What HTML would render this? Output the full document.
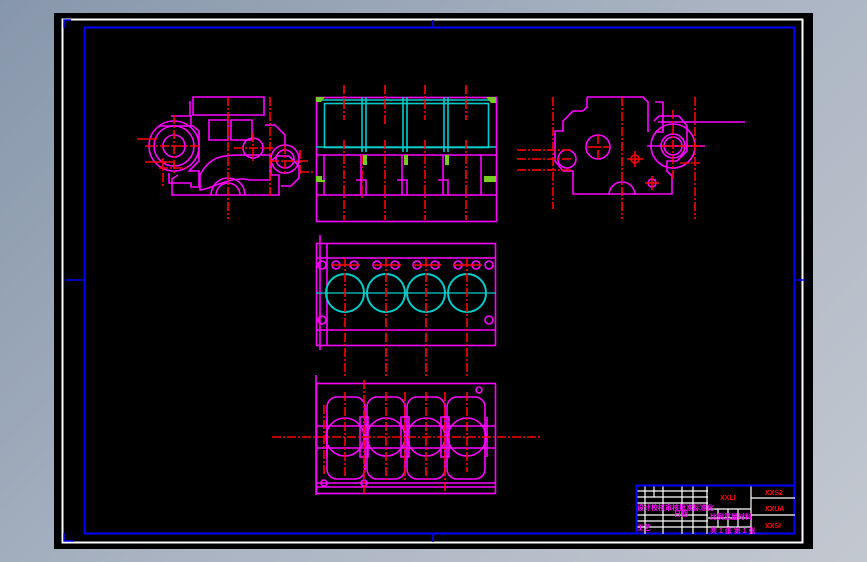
<!DOCTYPE html>
<html><head><meta charset="utf-8"><style>
html,body{margin:0;padding:0;width:867px;height:562px;overflow:hidden;background:linear-gradient(135deg,#8797ab 0%,#a9b3c2 50%,#c3c8d0 100%);}
svg{position:absolute;left:0;top:0}
text{font-family:"Liberation Sans","Noto Sans CJK SC",sans-serif;font-weight:bold}
</style></head><body>
<svg width="867" height="562" viewBox="0 0 867 562">
<rect x="54" y="13" width="759" height="536" fill="#000"/>
<rect x="62.5" y="19.5" width="740" height="523" fill="none" stroke="#fff" stroke-width="2"/>
<rect x="84.5" y="27.5" width="710" height="506" fill="none" stroke="#00f" stroke-width="2"/>
<path d="M64 28V20H71M64 533v8h10M66 280h18M795 280h10M433 20v7M433 534v8" stroke="#00f" fill="none" stroke-width="1.5"/>

<g fill="none" stroke-width="1.6">
<!-- LEFT VIEW -->
<g stroke="#f0f">
<path d="M193 97h71v18h-71z M190 101v16 M264 97v12"/>
<path d="M171 116h20v10h-20 M158 126h35l6 5v30l-10 10 10 0v16h-8v-4h-22v-10 M171 195h108v-20h-8v-14 l6-5 h12 l10 10 v12 l-8 8 h-10 M172 195v-16l6-4"/>
<circle cx="174" cy="146" r="20"/><circle cx="174" cy="146" r="11"/><circle cx="174" cy="146" r="25"/>
<path d="M209 120h19v20h-19z M231 120h21v20h-21z"/>
<circle cx="253" cy="148" r="10"/>
<circle cx="285" cy="159" r="14"/><circle cx="285" cy="159" r="9"/>
<path d="M265 125h10l10 10v12 M200 175c10-20 25-20 45-20h25v25h-20c-20-5-40 10-50 10z"/>
<path d="M211 195a17 17 0 0 1 34 0 M216 195a12 12 0 0 1 24 0"/>
</g>
<g stroke="#f00">
<path d="M228 97v122 M270 97v100 M145 146h55 M174 115v60 M159 168h30 M163 158v30 M234 148h40 M253 133v30 M270 161h38 M285 145v30 M300 150v25 M300 172h14" stroke-dasharray="9 2 2 2"/>
<path d="M137 139h20 M145 162h30"/>
</g>

<!-- FRONT VIEW -->
<g stroke="#f0f">
<rect x="316.5" y="97.5" width="180" height="124"/>
<path d="M316 195h180 M316 155h180 M324 155v40 M481 155v40 M361 155v40 M402 155v40 M443 155v40 M356 180h10v15 M397 180h10v15 M438 180h10v15"/>
</g>
<g stroke="#0cc">
<rect x="324.5" y="103.5" width="164" height="44"/>
<path d="M316 100h180 M316 147h180 M362 97v55 M403 97v55 M444 97v55 M366 97v55 M407 97v55 M448 97v55"/>
</g>
<g fill="#7c2" stroke="none">
<path d="M316 97h9l-4 5h-5z M486 97h10v6h-5z M316 176h6v4h-6z M316 180h9v2h-9z M484 176h12v6h-12z M363 155h4v10h-4z M404 155h4v10h-4z M445 155h4v10h-4z"/>
</g>
<g stroke="#f00" stroke-dasharray="9 2 2 2"><path d="M344 85v35 M385 85v40 M425 85v35 M466 85v35 M344 140v80 M385 140v80 M425 140v80 M466 140v80 M362 155v45"/></g>

<!-- TOP PLAN -->
<g stroke="#f0f">
<rect x="316.5" y="243.5" width="179" height="102"/>
<path d="M316 258h180 M316 330h180 M327 243v102 M320 235v115"/>
<circle cx="322" cy="265" r="4"/><circle cx="489" cy="265" r="4"/><circle cx="322" cy="320" r="4"/><circle cx="489" cy="320" r="4"/>
<circle cx="336" cy="265" r="4"/><circle cx="354" cy="265" r="4"/><circle cx="377" cy="265" r="4"/><circle cx="395" cy="265" r="4"/>
<circle cx="417" cy="265" r="4"/><circle cx="435" cy="265" r="4"/><circle cx="458" cy="265" r="4"/><circle cx="476" cy="265" r="4"/>
</g>
<g stroke="#0cc" stroke-width="2"><circle cx="345" cy="293" r="19"/><circle cx="386" cy="293" r="19"/><circle cx="426" cy="293" r="19"/><circle cx="467" cy="293" r="19"/><path d="M316 293h180" stroke-width="1.2"/></g>
<g stroke="#f00"><path d="M332 265h28 M373 265h28 M413 265h28 M454 265h28"/><path d="M345 258v120 M386 258v120 M426 258v120 M467 258v120" stroke-dasharray="9 2 2 2"/></g>

<!-- BOTTOM VIEW -->
<g stroke="#f0f">
<rect x="316.5" y="383.5" width="179" height="110"/>
<path d="M316 375v120 M316 483h180 M316 487h180"/>
<rect x="327" y="397" width="38" height="82" rx="10"/><rect x="367" y="397" width="38" height="82" rx="10"/><rect x="407" y="397" width="38" height="82" rx="10"/><rect x="447" y="397" width="38" height="82" rx="10"/>
<circle cx="345" cy="437" r="19"/><circle cx="386" cy="437" r="19"/><circle cx="426" cy="437" r="19"/><circle cx="467" cy="437" r="19"/>
<path d="M316 426h180 M316 448h180 M360 417h8v40h-8z M401 417h8v40h-8z M441 417h8v40h-8z M327 417v40 M487 417v40"/>
<circle cx="479" cy="390" r="3"/><circle cx="324" cy="483" r="3"/><circle cx="364" cy="483" r="3"/>
</g>
<g stroke="#f00"><path d="M272 437h268" stroke-dasharray="9 2 2 2"/><path d="M364 380v115 M405 392v90 M445 392v100 M345 392v85 M386 392v90 M426 392v90 M467 392v80 M324 405v70" stroke-dasharray="9 2 2 2"/></g>

<!-- RIGHT VIEW -->
<g stroke="#f0f">
<path d="M587 97h56l5 5v30 M587 97v10l-4 4v0h-10l-10 10v10 h-8v30l8 10h10v23h99v-18l-5-5v-10h10l10-10v-25l-8-10h-20l-5 5 M655 102h8v30h-8"/>
<circle cx="598" cy="147" r="12"/><circle cx="567" cy="159" r="9"/>
<circle cx="673" cy="146" r="22"/><circle cx="673" cy="146" r="12"/><circle cx="673" cy="146" r="9"/>
<path d="M609 195a13 13 0 0 1 26 0 M658 122h87 M647 146h58"/>
<circle cx="652" cy="183" r="4"/>
</g>
<g stroke="#f00">
<path d="M553 97v112 M622 97v122 M695 97v122 M517 150h55 M517 159h55 M517 170h55 M588 147h22 M598 135v25 M662 146h38 M673 110v70 M680 163h20" stroke-dasharray="9 2 2 2"/>
<circle cx="635" cy="159" r="4"/><path d="M627 159h16 M635 151v16 M645 183h14 M652 176v14"/>
</g>

<!-- TITLE BLOCK -->
<g stroke="#fff" stroke-width="1.2">
<path d="M636 491h72 M636 497h72 M636 503h72 M636 515h72 M636 521h72 M636 527h72 M645 485v49 M654 485v12 M663 485v49 M682 485v49 M693 485v49 M707 485v49 M708 509h43 M708 518h43 M708 527h43 M751 485v49 M751 498h44 M751 515h44 M718 509v18 M728 509v18 M738 509v18"/>
</g>
<path d="M636.5 534V485.5H795.5" stroke="#00f" stroke-width="2"/>
</g>
<g font-size="7" fill="#f0f"><text x="637" y="510">设计校核审核批准标准化</text><text x="637" y="530">工艺</text><text x="674" y="516">日期</text><text x="710" y="519">比例重量材料</text><text x="710" y="533">共 1 张 第 1 张</text></g>
<g font-size="7" fill="#f00"><text x="720" y="500">XXLI</text><text x="765" y="495">XXS2</text><text x="765" y="511">XXUA</text><text x="765" y="528">XXSI</text></g>
</svg>
</body></html>
